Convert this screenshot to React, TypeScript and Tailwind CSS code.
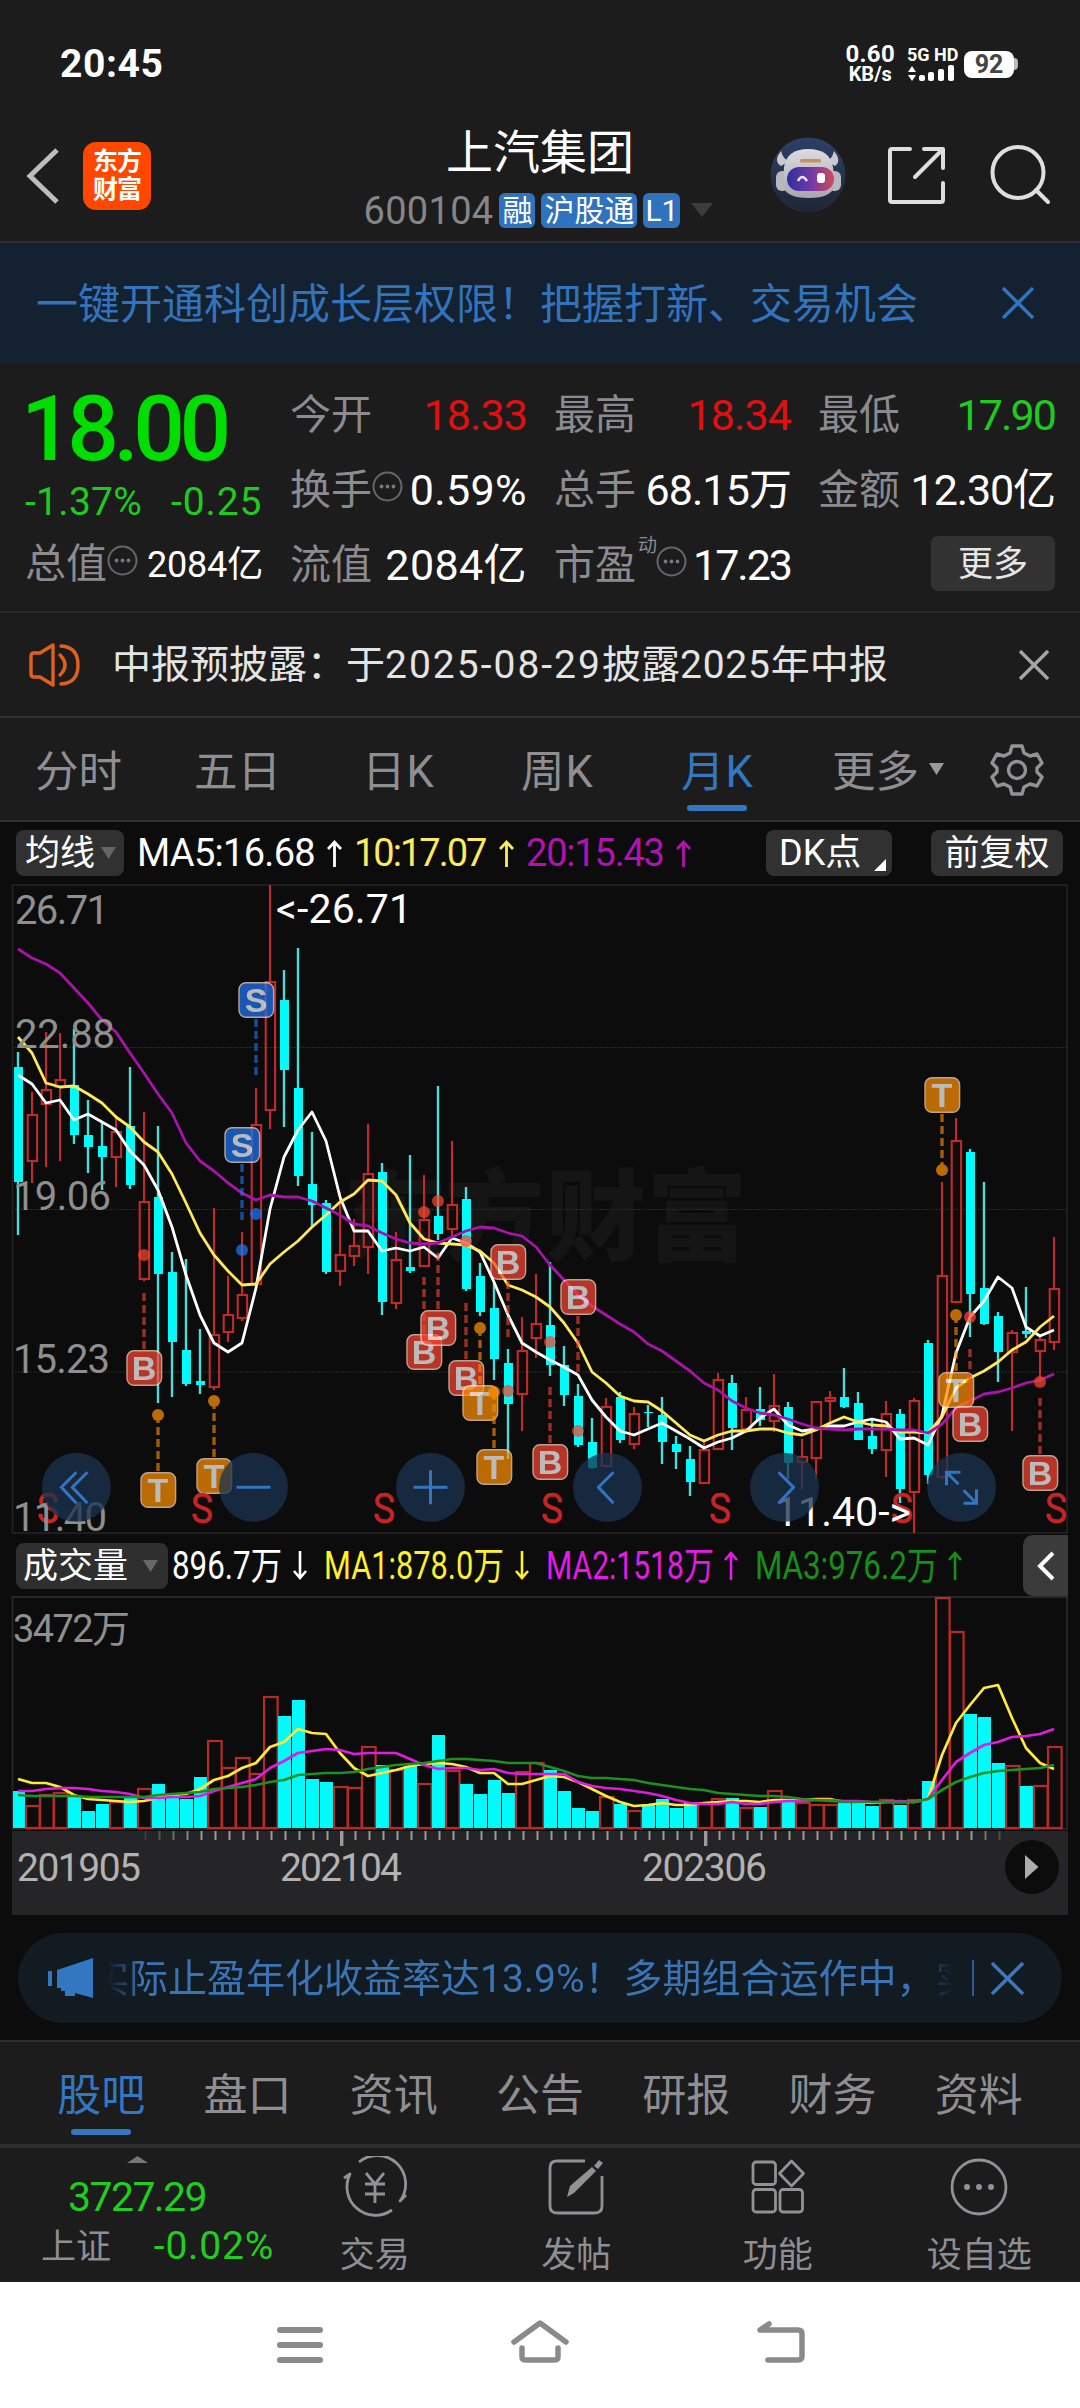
import type { ReactNode } from "react";
import clsx from "clsx";

/* ---------- données du graphique ---------- */

// 1 = hausse (rouge, creux), 0 = baisse (cyan, plein)
// [sens, mèche haute, mèche basse, corps haut, corps bas, sommet du volume]
const candles: number[][] = [
    [0, 1052, 1235, 1067, 1182, 1791], [1, 1092, 1183, 1115, 1161, 1806], [1, 1032, 1167, 1090, 1104, 1795],
    [1, 1033, 1161, 1080, 1087, 1793], [0, 1029, 1144, 1085, 1135, 1797], [0, 1100, 1173, 1135, 1147, 1811],
    [0, 1123, 1190, 1146, 1157, 1804], [1, 1115, 1187, 1132, 1157, 1802], [0, 1067, 1189, 1126, 1185, 1798],
    [1, 1112, 1281, 1202, 1279, 1789], [0, 1126, 1403, 1197, 1274, 1784], [0, 1252, 1397, 1272, 1342, 1795],
    [0, 1259, 1386, 1350, 1384, 1799], [0, 1329, 1394, 1381, 1385, 1777], [1, 1208, 1390, 1335, 1387, 1741],
    [1, 1276, 1342, 1315, 1332, 1768], [1, 1232, 1321, 1295, 1318, 1758], [1, 1088, 1285, 1125, 1284, 1774],
    [1, 885, 1129, 982, 1110, 1697], [0, 970, 1127, 1000, 1070, 1716], [0, 948, 1186, 1088, 1176, 1700],
    [0, 1132, 1227, 1184, 1205, 1779], [0, 1200, 1274, 1203, 1272, 1782], [1, 1192, 1286, 1255, 1271, 1787],
    [1, 1219, 1266, 1246, 1256, 1788], [1, 1124, 1274, 1174, 1247, 1747], [0, 1163, 1315, 1172, 1302, 1765],
    [1, 1232, 1309, 1260, 1303, 1770], [0, 1155, 1273, 1267, 1271, 1766], [1, 1175, 1267, 1220, 1266, 1784],
    [0, 1086, 1240, 1216, 1234, 1735], [1, 1141, 1238, 1205, 1229, 1771], [0, 1187, 1291, 1199, 1289, 1784],
    [0, 1263, 1316, 1276, 1312, 1794], [0, 1283, 1380, 1308, 1359, 1780], [0, 1349, 1459, 1363, 1404, 1793],
    [1, 1317, 1431, 1351, 1394, 1772], [1, 1274, 1358, 1324, 1338, 1763], [0, 1262, 1376, 1325, 1365, 1770],
    [0, 1346, 1406, 1365, 1395, 1791], [0, 1384, 1447, 1396, 1445, 1808], [0, 1418, 1469, 1442, 1468, 1811],
    [1, 1398, 1467, 1407, 1466, 1797], [0, 1392, 1443, 1397, 1440, 1804], [1, 1407, 1449, 1414, 1444, 1811],
    [0, 1405, 1427, 1412, 1413, 1805], [0, 1397, 1464, 1415, 1442, 1799], [0, 1436, 1469, 1444, 1452, 1808],
    [0, 1446, 1496, 1459, 1482, 1802], [1, 1441, 1484, 1450, 1483, 1803], [1, 1373, 1450, 1380, 1449, 1799],
    [0, 1375, 1450, 1383, 1428, 1798], [1, 1397, 1430, 1410, 1429, 1808], [0, 1387, 1426, 1409, 1420, 1807],
    [1, 1374, 1432, 1406, 1421, 1791], [0, 1402, 1479, 1407, 1463, 1802], [1, 1439, 1489, 1457, 1462, 1803],
    [1, 1401, 1478, 1402, 1458, 1805], [1, 1391, 1422, 1398, 1401, 1805], [0, 1368, 1408, 1397, 1407, 1803],
    [0, 1392, 1440, 1403, 1440, 1803], [0, 1418, 1454, 1436, 1449, 1806], [1, 1401, 1477, 1414, 1450, 1800],
    [0, 1409, 1503, 1414, 1489, 1805], [1, 1398, 1533, 1401, 1492, 1800], [0, 1340, 1484, 1343, 1475, 1781],
    [1, 1182, 1479, 1276, 1477, 1598], [1, 1118, 1303, 1141, 1302, 1632], [0, 1149, 1337, 1152, 1294, 1714],
    [0, 1182, 1325, 1288, 1324, 1717], [0, 1312, 1382, 1316, 1352, 1763], [1, 1330, 1431, 1333, 1352, 1766],
    [0, 1287, 1338, 1331, 1334, 1786], [1, 1336, 1382, 1340, 1351, 1786], [1, 1237, 1350, 1289, 1342, 1747],
];

const ma5 = [1075, 1084, 1103, 1100, 1120, 1114, 1122, 1130, 1151, 1165, 1190, 1227, 1275, 1315, 1343, 1352, 1343, 1288, 1209, 1157, 1130, 1112, 1141, 1197, 1231, 1231, 1251, 1248, 1251, 1247, 1258, 1238, 1243, 1252, 1282, 1315, 1343, 1352, 1360, 1367, 1375, 1400, 1417, 1431, 1435, 1429, 1423, 1431, 1439, 1448, 1442, 1438, 1431, 1418, 1409, 1425, 1431, 1429, 1426, 1426, 1422, 1419, 1422, 1439, 1438, 1445, 1415, 1353, 1317, 1301, 1277, 1288, 1327, 1336, 1330];
const ma10 = [1037, 1053, 1083, 1087, 1086, 1094, 1103, 1117, 1127, 1142, 1152, 1174, 1203, 1233, 1255, 1271, 1285, 1284, 1264, 1252, 1241, 1227, 1215, 1202, 1194, 1180, 1181, 1195, 1223, 1239, 1243, 1244, 1245, 1251, 1263, 1285, 1290, 1297, 1307, 1323, 1343, 1372, 1383, 1396, 1401, 1402, 1411, 1423, 1435, 1441, 1435, 1431, 1431, 1429, 1429, 1433, 1435, 1430, 1423, 1417, 1422, 1425, 1426, 1432, 1432, 1433, 1417, 1388, 1378, 1371, 1362, 1350, 1342, 1327, 1316];
const ma20 = [949, 958, 964, 973, 988, 1003, 1020, 1032, 1053, 1073, 1094, 1113, 1143, 1161, 1171, 1183, 1193, 1200, 1195, 1197, 1197, 1201, 1208, 1215, 1224, 1226, 1233, 1239, 1243, 1244, 1243, 1237, 1231, 1227, 1228, 1233, 1236, 1247, 1265, 1280, 1295, 1306, 1315, 1324, 1332, 1344, 1351, 1361, 1371, 1383, 1390, 1401, 1408, 1413, 1415, 1419, 1424, 1428, 1429, 1430, 1429, 1429, 1429, 1430, 1430, 1433, 1424, 1408, 1401, 1394, 1392, 1388, 1383, 1380, 1374];

const vol1 = [1779, 1783, 1783, 1787, 1795, 1799, 1800, 1801, 1802, 1801, 1798, 1795, 1794, 1789, 1780, 1776, 1768, 1763, 1747, 1742, 1729, 1733, 1734, 1753, 1768, 1776, 1773, 1770, 1766, 1764, 1763, 1764, 1767, 1773, 1773, 1784, 1784, 1780, 1776, 1777, 1782, 1789, 1796, 1802, 1806, 1805, 1803, 1805, 1805, 1803, 1802, 1801, 1801, 1802, 1800, 1800, 1800, 1799, 1799, 1802, 1802, 1803, 1802, 1802, 1802, 1799, 1755, 1723, 1705, 1688, 1685, 1718, 1748, 1763, 1769];
const vol2 = [1791, 1791, 1789, 1788, 1788, 1789, 1791, 1792, 1794, 1798, 1798, 1797, 1797, 1796, 1791, 1787, 1783, 1779, 1768, 1761, 1753, 1751, 1749, 1750, 1754, 1753, 1753, 1753, 1759, 1765, 1769, 1768, 1768, 1770, 1769, 1773, 1774, 1774, 1774, 1774, 1782, 1786, 1788, 1789, 1791, 1793, 1796, 1800, 1803, 1804, 1804, 1802, 1804, 1804, 1802, 1801, 1801, 1800, 1800, 1801, 1801, 1802, 1802, 1801, 1802, 1799, 1780, 1762, 1753, 1745, 1742, 1737, 1736, 1734, 1729];
const vol3 = [1795, 1796, 1796, 1796, 1796, 1797, 1797, 1797, 1797, 1797, 1795, 1794, 1793, 1792, 1789, 1788, 1787, 1785, 1782, 1780, 1775, 1774, 1773, 1773, 1772, 1769, 1767, 1765, 1764, 1763, 1761, 1759, 1759, 1760, 1761, 1763, 1763, 1763, 1767, 1771, 1776, 1778, 1778, 1779, 1780, 1783, 1785, 1787, 1789, 1790, 1793, 1794, 1795, 1796, 1796, 1797, 1799, 1800, 1801, 1802, 1802, 1802, 1802, 1802, 1802, 1799, 1790, 1782, 1777, 1773, 1771, 1770, 1769, 1768, 1765];

const x = (i: number) => 18 + 14 * i;
const line = (ys: number[]) => ys.map((y, i) => `${x(i)},${y}`).join(" ");

// [lettre, x, centre y du badge, y du point, début et fin des tirets]
type Marker = [string, number, number, number, number, number];
const markers: Marker[] = [
    ["S", 256, 1000, 1214, 1019, 1075],
    ["S", 242, 1145, 1250, 1164, 1220],
    ["B", 144, 1368, 1255, 1293, 1350],
    ["T", 158, 1490, 1415, 1415, 1472],
    ["T", 214, 1476, 1401, 1401, 1458],
    ["B", 424, 1352, 1212, 1277, 1334],
    ["B", 438, 1328, 1201, 1253, 1310],
    ["B", 466, 1378, 1241, 1303, 1360],
    ["T", 480, 1403, 1328, 1328, 1385],
    ["T", 494, 1467, 1392, 1392, 1449],
    ["B", 508, 1262, 1391, 1281, 1337],
    ["B", 550, 1462, 1342, 1387, 1444],
    ["B", 578, 1297, 1431, 1316, 1372],
    ["T", 942, 1095, 1170, 1114, 1170],
    ["T", 956, 1390, 1315, 1315, 1372],
    ["B", 970, 1424, 1317, 1349, 1405],
    ["B", 1040, 1473, 1382, 1398, 1455],
];
const markerColor: Record<string, string> = { S: "#1d76f5", B: "#fa4430", T: "#ff9000" };

/* ---------- petits éléments ---------- */

function Cross({ size, color, w = 3.4 }: { size: number; color: string; w?: number }) {
    return (
        <svg width={size} height={size} viewBox={`0 0 ${size} ${size}`} stroke={color} strokeWidth={w}>
            <path d={`M1 1L${size - 1} ${size - 1}M${size - 1} 1L1 ${size - 1}`} />
        </svg>
    );
}

function Info({ className }: { className?: string }) {
    return (
        <svg width="31" height="31" viewBox="0 0 31 31" className={clsx("shrink-0", className)}>
            <circle cx="15.5" cy="15.5" r="14" fill="none" stroke="#66676a" strokeWidth="2" />
            <g fill="#77787b">
                <circle cx="9.5" cy="15.5" r="1.9" />
                <circle cx="15.5" cy="15.5" r="1.9" />
                <circle cx="21.5" cy="15.5" r="1.9" />
            </g>
        </svg>
    );
}

function Caret({ w, h, color }: { w: number; h: number; color: string }) {
    return (
        <svg width={w} height={h} viewBox="0 0 10 10" preserveAspectRatio="none" className="shrink-0">
            <path d="M0 0H10L5 10Z" fill={color} />
        </svg>
    );
}

function Arrow({ className }: { className?: string }) {
    return (
        <svg width="15" height="29" viewBox="0 0 15 29" fill="none" stroke="currentColor" strokeWidth="2.8" className={clsx("shrink-0", className)}>
            <path d="M7.5 28V3M1 10L7.5 3L14 10" />
        </svg>
    );
}

interface CellProps {
    label: string;
    value: string;
    color?: string;
    tracking?: string;
    info?: boolean;
    sup?: string;
}

function Cell({ label, value, color = "text-white", tracking = "tracking-[-0.9px]", info, sup }: CellProps) {
    return (
        <div className="flex h-[75px] items-center text-[41px]">
            <span className="shrink-0 pt-[2px] text-[#8b8b90]">{label}</span>
            {sup && <span className="-mr-[1px] ml-[2px] self-start pt-[9px] text-[19px] text-[#8b8b90]">{sup}</span>}
            {info && <Info className="mt-[-6px]" />}
            <span className={clsx("ml-auto whitespace-nowrap pt-[2px] text-[43px]", tracking, color)}>{value}</span>
        </div>
    );
}

/* ---------- blocs de la page ---------- */

function StatusBar() {
    return (
        <div className="flex h-[128px] items-center pl-[60px] pr-[62px] text-white">
            <span className="text-[39px] font-bold tracking-[0.6px]">20:45</span>
            <div className="ml-auto flex flex-col items-center pr-[12px] text-[24px] font-bold leading-[20px]">
                <span className="tracking-[0.3px]">0.60</span>
                <span className="text-[20px]">KB/s</span>
            </div>
            <div className="flex w-[49px] flex-col">
                <span className="whitespace-nowrap text-[18px] font-bold leading-[18px]">5G HD</span>
                <svg width="49" height="17" viewBox="0 0 49 17" fill="#fff" className="mt-px">
                    <path d="M1 7L5 1L9 7ZM1 10L5 16L9 10Z" />
                    <rect x="12" y="10" width="6" height="6" rx="2" />
                    <rect x="21" y="7" width="6" height="9" rx="2" />
                    <rect x="31" y="4" width="6" height="12" rx="2" />
                    <rect x="41" y="0" width="6" height="16" rx="2" />
                </svg>
            </div>
            <div className="ml-[8px] flex h-[27px] w-[50px] items-center justify-center rounded-[8px] bg-white text-[25px] font-bold text-[#444]">92</div>
            <div className="h-[12px] w-[4px] rounded-r bg-[#bbb]" />
        </div>
    );
}

function Robot() {
    return (
        <svg width="76" height="76" viewBox="0 0 76 76">
            <defs>
                <linearGradient id="sky" x2="0" y2="1">
                    <stop stopColor="#2c4066" />
                    <stop offset="1" stopColor="#1f2634" />
                </linearGradient>
                <linearGradient id="visor">
                    <stop stopColor="#2b2f9c" />
                    <stop offset=".55" stopColor="#7a3aa8" />
                    <stop offset="1" stopColor="#cf4a58" />
                </linearGradient>
                <linearGradient id="shell" x2="0" y2="1">
                    <stop stopColor="#dcdbe0" />
                    <stop offset="1" stopColor="#aaa6b0" />
                </linearGradient>
            </defs>
            <circle cx="38" cy="38" r="37.5" fill="url(#sky)" />
            <path d="M11 14Q3 24 11 29L19 24Q13 22 11 14ZM64 14Q72 24 65 29L57 24Q62 22 64 14Z" fill="#c9c8d0" />
            <rect x="6" y="34" width="13" height="20" rx="6" fill="#b9b7c0" />
            <rect x="58" y="34" width="13" height="20" rx="6" fill="#b9b7c0" />
            <path d="M14 30Q17 12 38 12Q60 12 63 30L65 48Q62 61 39 61Q15 61 13 48Z" fill="url(#shell)" />
            <rect x="17" y="30" width="47" height="24" rx="12" fill="url(#visor)" />
            <rect x="30" y="22" width="21" height="3.5" rx="1.5" fill="#c59066" />
            <path d="M28 44Q32 36 37 44" fill="none" stroke="#e8e4ff" strokeWidth="2.4" />
            <rect x="47" y="36" width="8" height="10" rx="3" fill="#fff" />
        </svg>
    );
}

function Header() {
    return (
        <div className="grid h-[115px] grid-cols-[360px_360px_360px] border-b-2 border-[#2d3136]">
            <div className="flex items-center pb-[21px] pl-[26px] pt-px">
                <svg width="34" height="56" viewBox="0 0 34 56" fill="none" stroke="#bdbdbd" strokeWidth="5">
                    <path d="M31 2L4 28L31 54" />
                </svg>
                <div className="ml-[23px] flex h-[68px] w-[68px] flex-col items-center justify-center rounded-[13px] bg-[#ff4700] text-[25px] font-bold leading-[28px] text-white">
                    <span className="tracking-[-1px]">东方</span>
                    <span className="tracking-[-1px]">财富</span>
                </div>
            </div>
            <div className="flex flex-col items-center">
                <div className="h-[49px] whitespace-nowrap pt-[2px] text-[47px] leading-[46px] text-white">上汽集团</div>
                <div className="flex h-[66px] items-center gap-[6px] pr-[3px]">
                    <span className="pt-[2px] text-[38px] tracking-[0.3px] text-[#85868a]">600104</span>
                    <span className="flex h-[35px] w-[36px] items-center justify-center rounded-[6px] bg-[#2f73be] pt-[2px] text-[30px] text-white">融</span>
                    <span className="flex h-[35px] w-[96px] items-center justify-center whitespace-nowrap rounded-[6px] bg-[#2f73be] pt-[2px] text-[30px] text-white">沪股通</span>
                    <span className="flex h-[35px] w-[37px] items-center justify-center rounded-[6px] bg-[#2f73be] pt-[2px] text-[30px] text-white">L1</span>
                    <span className="ml-[5px]"><Caret w={22} h={14} color="#3c3c3c" /></span>
                </div>
            </div>
            <div className="flex items-start pl-[50px] pt-[9px]">
                <Robot />
                <svg width="61" height="61" viewBox="0 0 61 61" fill="none" stroke="#dedede" strokeWidth="4" strokeLinecap="round" strokeLinejoin="round" className="ml-[39px] mt-[8px]">
                    <path d="M25 4H7Q5 4 5 6V55Q5 57 7 57H56Q58 57 58 55V38M39 4H58V23M57 5L30 32" />
                </svg>
                <svg width="62" height="62" viewBox="0 0 62 62" fill="none" stroke="#dedede" strokeWidth="4" strokeLinecap="round" className="ml-[43px] mt-[8px]">
                    <circle cx="29" cy="27.5" r="25.5" />
                    <path d="M47 45L59 57" />
                </svg>
            </div>
        </div>
    );
}

function Quote() {
    return (
        <div className="flex h-[250px] border-b-2 border-[#272727] pl-[26px] pr-[26px] pt-[14px]">
            <div className="flex w-[264px] shrink-0 flex-col">
                <div className="-ml-[5px] h-[101px] pt-[7px] text-[91px] font-medium leading-[90px] tracking-[-5.5px] text-[#00dd00]">18.00</div>
                <div className="-ml-px flex h-[48px] items-center text-[39px] text-[#1ecb1e]">
                    <span className="w-[146px] tracking-[0.3px]">-1.37%</span>
                    <span className="tracking-[0.9px]">-0.25</span>
                </div>
                <div className="flex h-[75px] items-center">
                    <span className="-ml-px pt-[2px] text-[41px] text-[#8b8b90]">总值</span>
                    <Info className="mt-[-6px]" />
                    <span className="ml-[9px] whitespace-nowrap pt-[2px] text-[36px] tracking-[-0.2px] text-white">2084亿</span>
                </div>
            </div>
            <div className="grid grid-cols-[237px_237px_237px] content-start gap-x-[27px] pl-[-1px]">
                <Cell label="今开" value="18.33" color="text-[#e01010]" />
                <Cell label="最高" value="18.34" color="text-[#e01010]" />
                <Cell label="最低" value="17.90" color="text-[#1ecb1e]" tracking="tracking-[-1.9px]" />
                <Cell label="换手" value="0.59%" tracking="tracking-[0.4px]" info />
                <Cell label="总手" value="68.15万" />
                <Cell label="金额" value="12.30亿" tracking="tracking-[-1.1px]" />
                <Cell label="流值" value="2084亿" tracking="tracking-[0.4px]" />
                <Cell label="市盈" value="17.23" tracking="tracking-[-2px]" info sup="动" />
                <div className="flex h-[73px] items-center justify-end">
                    <span className="flex h-[55px] w-[124px] items-center justify-center rounded-[7px] bg-[#323233] pt-px text-[35px] text-[#e6e6e6]">更多</span>
                </div>
            </div>
        </div>
    );
}

function Notice() {
    return (
        <div className="flex h-[105px] items-center border-b-2 border-[#303030] pl-[28px] pr-[31px]">
            <svg width="54" height="44" viewBox="0 0 54 44" fill="none" stroke="#e2611a" strokeWidth="3.4" strokeLinejoin="round" strokeLinecap="round">
                <path d="M25 2L12 10H6Q3 10 3 13V31Q3 34 6 34H12L25 42Z" />
                <path d="M32 12Q42 22 32 32" />
                <path d="M33 3Q50 4 50 22T33 41" />
            </svg>
            <span className="ml-[30px] whitespace-nowrap pt-[2px] text-[39px] text-[#e4e4e4]">
                中报预披露：于<span className="tracking-[2px]">2025-08-29</span>披露<span className="tracking-[0.8px]">2025</span>年中报
            </span>
            <span className="ml-auto"><Cross size={30} color="#a5a5a5" /></span>
        </div>
    );
}

function Periods() {
    return (
        <div className="flex h-[104px] items-center border-b-2 border-[#303030] pl-[35px] pt-[7px] text-[43.5px] text-[#8e8e93]">
            <span className="w-[159px]">分时</span>
            <span className="w-[168px]">五日</span>
            <span className="w-[159px] tracking-[1px]">日K</span>
            <span className="w-[160px] tracking-[1px]">周K</span>
            <span className="relative flex h-[66px] items-center tracking-[1px] text-[#3377c2]">
                月K
                <span className="absolute -bottom-[5px] left-1/2 h-[6px] w-[60px] -translate-x-1/2 rounded-full bg-[#3377c2]" />
            </span>
            <span className="ml-auto">更多</span>
            <span className="mb-2 ml-[10px]"><Caret w={15} h={12} color="#9a9a9e" /></span>
            <svg width="54" height="54" viewBox="0 0 54 54" fill="none" stroke="#929297" strokeWidth="3.4" strokeLinejoin="round" className="mb-[6px] ml-[46px] mr-[36px]">
                <path d="M22 3H32L34 10L40 13L47 11L52 20L47 25V29L52 34L47 43L40 41L34 44L32 51H22L20 44L14 41L7 43L2 34L7 29V25L2 20L7 11L14 13L20 10Z" />
                <circle cx="27" cy="27" r="8.5" />
            </svg>
        </div>
    );
}

function AverageBar() {
    return (
        <div className="flex h-[62px] items-center pl-[16px] text-[38px]">
            <div className="flex h-[46px] w-[108px] items-center justify-between whitespace-nowrap rounded-[8px] bg-[#313132] pl-[9px] pr-[8px] text-[35px] text-white">
                均线<Caret w={15} h={12} color="#666" />
            </div>
            <span className="ml-[13px] flex w-[217px] items-center whitespace-nowrap tracking-[-0.7px] text-white">MA5:16.68<Arrow className="ml-[12px]" /></span>
            <span className="flex w-[172px] items-center whitespace-nowrap tracking-[-2px] text-[#ffe95c]">10:17.07<Arrow className="ml-[14px]" /></span>
            <span className="flex w-[240px] items-center whitespace-nowrap tracking-[-1.2px] text-[#b212b2]">20:15.43<Arrow className="ml-[12px]" /></span>
            <div className="flex h-[46px] w-[126px] items-center whitespace-nowrap rounded-[8px] bg-[#313132] pl-[13px] text-[36px] text-white">
                DK点
                <svg width="12" height="12" viewBox="0 0 12 12" className="ml-auto mr-[6px] mt-[24px] shrink-0"><path d="M12 0V12H0Z" fill="#fff" /></svg>
            </div>
            <div className="ml-[39px] flex h-[46px] w-[132px] items-center justify-center whitespace-nowrap rounded-[8px] bg-[#313132] pt-px text-[35px] text-white">前复权</div>
        </div>
    );
}

function RoundButton({ cx, children }: { cx: number; children: ReactNode }) {
    return (
        <g transform={`translate(${cx} 1487.3)`} fill="none" stroke="#3475c0" strokeWidth="3">
            <circle r="34.5" fill="#1a3350" fillOpacity=".76" stroke="none" />
            {children}
        </g>
    );
}

function PriceChart() {
    return (
        <svg width="1080" height="651" viewBox="0 884 1080 651" className="block">
            <text x="343" y="1253" fontSize="100" fontWeight="900" fill="#151515" textLength="404">东方财富</text>
            <g stroke="#333" strokeWidth="1.2" strokeDasharray="1.5 1.5">
                <path d="M12 1047.5H1067M12 1209.5H1067M12 1372H1067" />
            </g>
            <rect x="12.5" y="885" width="1054.5" height="648" fill="none" stroke="#242424" strokeWidth="1.6" />
            {candles.map(([up, hi, lo, top, bottom], i) =>
                up ? (
                    <g key={i} stroke="#c02a2a" strokeWidth="2.1" fill="none">
                        <path d={`M${x(i)} ${hi}V${top}M${x(i)} ${bottom}V${lo}`} />
                        <rect x={x(i) - 4.3} y={top} width="9.4" height={bottom - top} />
                    </g>
                ) : (
                    <g key={i}>
                        <rect x={x(i) - 1.2} y={hi} width="2.4" height={lo - hi} fill="#4adcd6" />
                        <rect x={x(i) - 4} y={top} width="9" height={bottom - top} fill="#00fbfb" />
                    </g>
                ),
            )}
            <g fill="none" strokeWidth="2.8" strokeLinejoin="round">
                <polyline points={line(ma5)} stroke="#fff" />
                <polyline points={line(ma10)} stroke="#ffe85c" />
                <polyline points={line(ma20)} stroke="#a913a9" />
            </g>
            <g fontSize="34" fontFamily="Liberation Sans" fontWeight="700" textAnchor="middle">
                {markers.map(([t, mx, my, dot, from, to], i) => (
                    <g key={i} opacity=".72">
                        <circle cx={mx} cy={dot} r="6" fill={markerColor[t]} />
                        <path d={`M${mx} ${from}V${to}`} stroke={markerColor[t]} strokeWidth="3.4" strokeDasharray="8 4" opacity=".85" />
                        <rect x={mx - 17} y={my - 17.3} width="34.6" height="34.6" rx="7" fill={markerColor[t]} stroke="#ffdfc8" strokeWidth="1.4" />
                        <text x={mx} y={my + 12.3} fill="#fff">{t}</text>
                    </g>
                ))}
            </g>
            <g fontSize="42" fill="#c92424" stroke="#c92424" strokeWidth=".6" textAnchor="middle">
                {[48, 202, 384, 552, 720, 902, 1056].map((sx) => (
                    <text key={sx} x={sx} y="1523" textLength="22" lengthAdjust="spacingAndGlyphs">S</text>
                ))}
            </g>
            <g fontSize="40" fill="#8f8f8f">
                <text x="15" y="924" textLength="94">26.71</text>
                <text x="15" y="1048" textLength="100">22.88</text>
                <text x="13" y="1210" textLength="98">19.06</text>
                <text x="13" y="1373" textLength="97">15.23</text>
                <text x="13" y="1531" textLength="94">11.40</text>
            </g>
            <g fontSize="41" fill="#fff">
                <text x="276" y="923" textLength="136">&lt;-26.71</text>
                <text x="775" y="1526" textLength="136">11.40-&gt;</text>
            </g>
            <RoundButton cx={76.4}><path d="M0 -15L-15 0L0 16M11 -15L-4 0L11 16" /></RoundButton>
            <RoundButton cx={253.5}><path d="M-17 0H17" /></RoundButton>
            <RoundButton cx={430.5}><path d="M-17 0H17M0 -17V17" /></RoundButton>
            <RoundButton cx={607.5}><path d="M6 -15L-9 0L6 16" /></RoundButton>
            <RoundButton cx={784.5}><path d="M-6 -15L9 0L-6 16" /></RoundButton>
            <RoundButton cx={961.5}><path d="M-15 -2V-15H-1M-15 -15L-3 -3M2 3L15 16M15 2V16H2" /></RoundButton>
        </svg>
    );
}

function VolumeBar() {
    return (
        <div className="flex h-[61px] items-center pl-[16px]">
            <div className="flex h-[46px] w-[152px] items-center justify-between whitespace-nowrap rounded-[8px] bg-[#2f2f30] pl-[7px] pr-[10px] pt-px text-[35px] text-white">
                成交量<Caret w={15} h={12} color="#686868" />
            </div>
            <svg width="840" height="50" viewBox="168 0 840 50" fontSize="38" className="shrink-0">
                <g fill="#fff"><text x="172" y="38" textLength="110" lengthAdjust="spacingAndGlyphs">896.7万</text></g>
                <g fill="#fff02a"><text x="324" y="38" textLength="180" lengthAdjust="spacingAndGlyphs">MA1:878.0万</text></g>
                <g fill="#e61ae6"><text x="546" y="38" textLength="168" lengthAdjust="spacingAndGlyphs">MA2:1518万</text></g>
                <g fill="#179017"><text x="755" y="38" textLength="183" lengthAdjust="spacingAndGlyphs">MA3:976.2万</text></g>
                <g fill="none" strokeWidth="2.6">
                    <path d="M300 10V37M294 30L300 37L306 30" stroke="#fff" />
                    <path d="M522 10V37M516 30L522 37L528 30" stroke="#fff02a" />
                    <path d="M731 39V12M725 19L731 12L737 19" stroke="#e61ae6" />
                    <path d="M955 39V12M949 19L955 12L961 19" stroke="#179017" />
                </g>
            </svg>
            <div className="ml-[15px] flex h-[61px] w-[45px] items-center justify-center rounded-l-[10px] bg-[#3b3b3c]">
                <svg width="18" height="30" viewBox="0 0 18 30" fill="none" stroke="#fff" strokeWidth="4"><path d="M16 2L3 15L16 28" /></svg>
            </div>
        </div>
    );
}

function VolumeChart() {
    return (
        <svg width="1080" height="319" viewBox="0 1596 1080 319" className="block">
            <path d="M12.5 1829V1597H1067V1829Z" fill="none" stroke="#282828" strokeWidth="1.8" />
            {candles.map(([up, , , , , top], i) =>
                up ? (
                    <rect key={i} x={x(i) - 6} y={top} width="13.6" height={1828 - top} fill="none" stroke="#b62a2a" strokeWidth="2.2" />
                ) : (
                    <rect key={i} x={i === 0 ? 13 : x(i) - 6} y={top} width={i === 0 ? 12 : 13} height={1828 - top} fill="#00fbfb" />
                ),
            )}
            <g fill="none" strokeWidth="2.7" strokeLinejoin="round">
                <polyline points={line(vol1)} stroke="#ffe93a" />
                <polyline points={line(vol2)} stroke="#df1cdf" />
                <polyline points={line(vol3)} stroke="#1f8f1f" />
            </g>
            <text x="13" y="1642" fontSize="38" fill="#8f8f8f" textLength="117">3472万</text>
            <rect x="12" y="1831" width="1056" height="84" fill="#252527" />
            {Array.from({ length: 62 }, (_, k) => k + 9).map((i) => {
                const big = i === 23 || i === 49;
                const fade = Math.min(1, (i - 8) / 5, (71 - i) / 3);
                return <rect key={i} x={x(i) + (big ? 0 : 0.5)} y="1831" width={big ? 3.4 : 2} height={big ? 15 : 9} fill="#9c9c9c" opacity={fade} />;
            })}
            <g fontSize="39" fill="#b2b2b2">
                <text x="17" y="1881" textLength="124">201905</text>
                <text x="280" y="1881" textLength="122">202104</text>
                <text x="642" y="1881" textLength="125">202306</text>
            </g>
            <circle cx="1032" cy="1867" r="27" fill="#0c0c0c" />
            <path d="M1025 1855L1038.500 1867L1025 1879Z" fill="#adadad" />
        </svg>
    );
}

function Promo() {
    return (
        <div className="mx-[18px] mt-[18px] flex h-[90px] items-center rounded-full bg-[#121a22] pl-[30px] pr-[38px]">
            <svg width="46" height="40" viewBox="0 0 46 40" fill="#3377c2" className="shrink-0">
                <rect x="0" y="13" width="4" height="15" />
                <path d="M9 12L45 0V40L27 35V38H17V33H13V30H9Z" />
            </svg>
            <div className="ml-[14px] flex w-[850px] overflow-hidden [mask-image:linear-gradient(90deg,transparent,#000_4%,#000_94%,transparent_99.500%)]">
                <span className="-ml-[18px] whitespace-nowrap pt-[2px] text-[39px] leading-[50px] text-[#3a74b4]">实际止盈年化收益率达13.9%！多期组合运作中，实际</span>
            </div>
            <span className="ml-[14px] h-[36px] w-[2px] bg-[#2c5c92]" />
            <span className="ml-auto"><Cross size={33} color="#3a78bf" /></span>
        </div>
    );
}

function Sections() {
    return (
        <div className="mt-[17px] flex h-[106px] items-center border-b-2 border-t-2 border-[#2e2e2e] bg-[#1c1c1c] px-[28px] pt-[6px] text-[44px] text-[#8e8e93]">
            {["股吧", "盘口", "资讯", "公告", "研报", "财务", "资料"].map((s, i) => (
                <span key={s} className={clsx("relative flex-1 text-center", i === 0 && "text-[#3377c2]")}>
                    {s}
                    {i === 0 && <span className="absolute -bottom-[17px] left-1/2 h-[6px] w-[60px] -translate-x-1/2 rounded-full bg-[#3377c2]" />}
                </span>
            ))}
        </div>
    );
}

function Action({ label, children }: { label: string; children: ReactNode }) {
    return (
        <div className="flex w-[201.5px] flex-col items-center pt-[8px] text-[35px] text-[#8e8e93]">
            <svg width="66" height="62" viewBox="-33 -31 66 62" fill="none" stroke="#929296" strokeWidth="2.8" strokeLinejoin="round">
                {children}
            </svg>
            <span className="mt-[20px]">{label}</span>
        </div>
    );
}

function BottomBar() {
    return (
        <div className="flex h-[136px] border-t-2 border-[#2e2e2e] bg-[#1c1c1c]">
            <div className="flex w-[274px] flex-col items-center pt-[8px] text-[#1fcf1f]">
                <span className="flex rotate-180"><Caret w={21} h={7} color="#77777a" /></span>
                <span className="mt-[14px] text-[41px] tracking-[-1.6px]">3727.29</span>
                <div className="mt-[9px] flex w-full items-center pl-[41px]">
                    <span className="w-[113px] pt-[2px] text-[35px] text-[#8e8e93]">上证</span>
                    <span className="text-[39px] tracking-[0.8px]">-0.02%</span>
                </div>
            </div>
            <Action label="交易">
                <path d="M-16 -25A28.500 28.500 0 0 1 25 14L31 8" />
                <path d="M17 23A28.500 28.500 0 0 1 -25 -13L-31 -9" />
                <path d="M-9 -14L0 -3L9 -14M0 -3V16M-10 -3H10M-10 7H10" />
            </Action>
            <Action label="发帖">
                <path d="M9 -26H-19Q-26 -26 -26 -19V19Q-26 26 -19 26H19Q26 26 26 19V-11" />
                <path stroke="none" d="M-9 10L-6 -1L16 -20L20 -16L-2 6ZM18 -21L23 -27L27 -24L22 -18Z" fill="#929296" />
            </Action>
            <Action label="功能">
                <rect x="-25" y="-25" width="22.500" height="22.500" rx="3" />
                <rect x="-25" y="2.500" width="22.500" height="22.500" rx="3" />
                <rect x="2" y="2.500" width="22.500" height="22.500" rx="3" />
                <path d="M13.500 -26L25.500 -13.500L13.500 -1L1.500 -13.500Z" />
            </Action>
            <Action label="设自选">
                <circle r="27" />
                <g fill="#929296" stroke="none"><circle cx="-12" r="3" /><circle r="3" /><circle cx="12" r="3" /></g>
            </Action>
        </div>
    );
}

function SystemNav() {
    return (
        <div className="flex flex-1 items-start bg-white pl-[277px] pt-[37px]">
            <svg width="530" height="46" viewBox="277 2319 530 46" fill="none" stroke="#8a8a8a" strokeWidth="6" strokeLinecap="round" strokeLinejoin="round">
                <path d="M280 2330H320M280 2345H320M280 2360H320" />
                <path strokeWidth="5.5" d="M514 2342L540 2323L566 2342M522 2348V2357Q522 2360 526 2360H554Q558 2360 558 2357V2348" />
                <path strokeWidth="5.5" d="M769 2324L760 2330H798Q802 2330 802 2334V2356Q802 2360 798 2360H768" />
            </svg>
        </div>
    );
}

export default function App() {
    return (
        <div className="flex h-[2408px] w-[1080px] flex-col overflow-hidden bg-[#0c0c0c] font-[Roboto,'Noto_Sans_CJK_SC',sans-serif] leading-none">
            <div className="bg-[#1c1c1c]">
                <StatusBar />
                <Header />
                <div className="flex h-[120px] items-center bg-[#142130] pl-[36px] pr-[46px]">
                    <span className="whitespace-nowrap pt-[3px] text-[42px] text-[#3273bd]">一键开通科创成长层权限！把握打新、交易机会</span>
                    <span className="ml-auto"><Cross size={32} color="#3273bd" /></span>
                </div>
                <Quote />
                <Notice />
                <Periods />
            </div>
            <AverageBar />
            <PriceChart />
            <VolumeBar />
            <VolumeChart />
            <Promo />
            <Sections />
            <BottomBar />
            <SystemNav />
        </div>
    );
}
